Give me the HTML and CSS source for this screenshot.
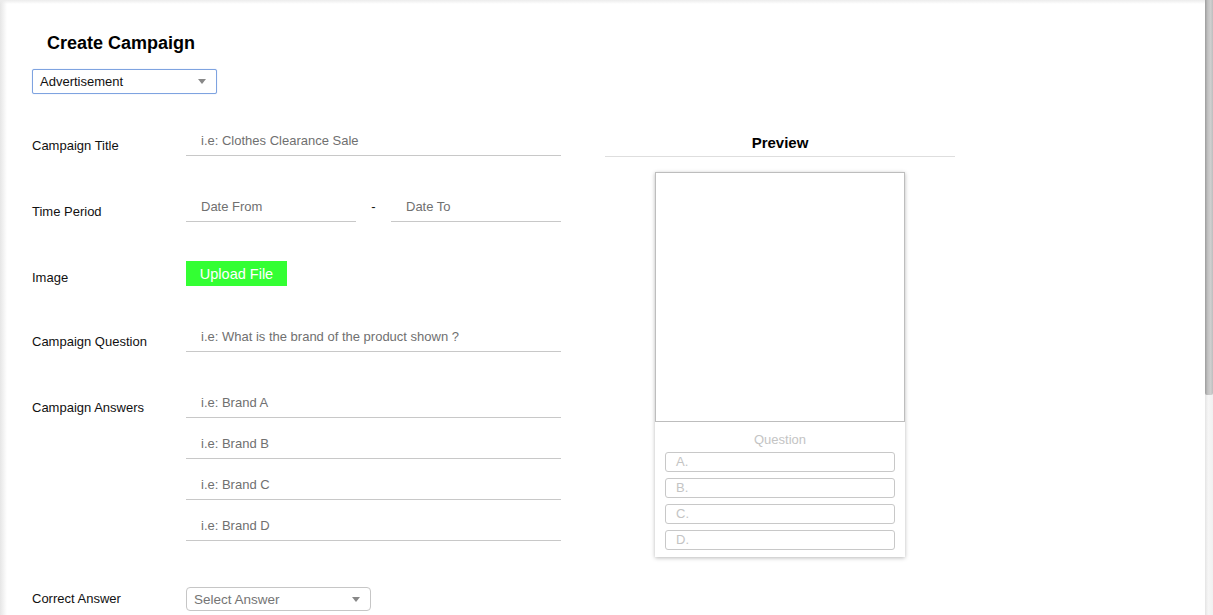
FILE: index.html
```html
<!DOCTYPE html>
<html>
<head>
<meta charset="utf-8">
<link rel="stylesheet" href="styles.css">
</head>
<body>
<div class="window">
  <main class="page">
    <h1 class="title">Create Campaign</h1>
    <div class="select type-select">
      <span class="select-text">Advertisement</span>
      <span class="caret"></span>
    </div>
    <div class="content">
      <div class="form">
        <div class="row">
          <div class="label">Campaign Title</div>
          <div class="field"><div class="input">i.e: Clothes Clearance Sale</div></div>
        </div>
        <div class="row">
          <div class="label">Time Period</div>
          <div class="field dates">
            <div class="input date">Date From</div>
            <span class="dash">-</span>
            <div class="input date">Date To</div>
          </div>
        </div>
        <div class="row row-image">
          <div class="label">Image</div>
          <div class="field"><button class="upload">Upload File</button></div>
        </div>
        <div class="row">
          <div class="label">Campaign Question</div>
          <div class="field"><div class="input">i.e: What is the brand of the product shown ?</div></div>
        </div>
        <div class="row">
          <div class="label">Campaign Answers</div>
          <div class="field answers">
            <div class="input">i.e: Brand A</div>
            <div class="input">i.e: Brand B</div>
            <div class="input">i.e: Brand C</div>
            <div class="input">i.e: Brand D</div>
          </div>
        </div>
        <div class="row row-correct">
          <div class="label">Correct Answer</div>
          <div class="field">
            <div class="select answer-select">
              <span class="select-text muted">Select Answer</span>
              <span class="caret"></span>
            </div>
          </div>
        </div>
      </div>
      <aside class="preview">
        <h2 class="preview-title">Preview</h2>
        <div class="card">
          <div class="card-image"></div>
          <div class="card-question">Question</div>
          <div class="card-answers">
            <div class="card-answer">A.</div>
            <div class="card-answer">B.</div>
            <div class="card-answer">C.</div>
            <div class="card-answer">D.</div>
          </div>
        </div>
      </aside>
    </div>
  </main>
  <div class="scrollbar"><div class="thumb"></div></div>
</div>
</body>
</html>
```

FILE: styles.css
```css
html, body {
  margin: 0;
  padding: 0;
  height: 100%;
  overflow: hidden;
  background: #fff;
  font-family: "Liberation Sans", Arial, sans-serif;
  color: #111;
}

.window {
  display: flex;
  height: 615px;
}

.page {
  flex: 1;
  padding: 0 0 0 32px;
  background:
    linear-gradient(to bottom, #ececec, rgba(255,255,255,0) 4px),
    linear-gradient(to right, #e6e6e6, rgba(255,255,255,0) 7px),
    #fff;
  overflow: hidden;
}

.title {
  margin: 0;
  padding: 33px 0 0 15px;
  font-size: 18px;
  line-height: 20px;
  font-weight: bold;
  color: #000;
}

.select {
  display: flex;
  align-items: center;
  justify-content: space-between;
  box-sizing: border-box;
  background: #fff;
}

.type-select {
  margin-top: 16px;
  width: 185px;
  height: 25px;
  border: 1px solid #7ea3e0;
  border-radius: 2px;
  box-shadow: 0 0 1px #a9c3ee;
  padding: 0 10px 0 7px;
}

.select-text {
  font-size: 13px;
  color: #111;
}

.select-text.muted {
  color: #757575;
  font-size: 13.5px;
}

.caret {
  width: 0;
  height: 0;
  border-left: 4px solid transparent;
  border-right: 4px solid transparent;
  border-top: 5px solid #888;
}

.content {
  display: flex;
  margin-top: 32px;
}

.form {
  display: flex;
  flex-direction: column;
  gap: 36px;
  width: 529px;
}

.row {
  display: flex;
}

.label {
  width: 154px;
  flex: none;
  padding-top: 10px;
  font-size: 13px;
  line-height: 20px;
  color: #111;
}

.field {
  width: 375px;
}

.input {
  box-sizing: border-box;
  height: 30px;
  border-bottom: 1px solid #c8c8c8;
  padding: 0 15px;
  font-size: 13px;
  line-height: 30px;
  color: #707070;
  white-space: nowrap;
}

.dates {
  display: flex;
  align-items: flex-start;
}

.date {
  width: 170px;
}

.dash {
  width: 35px;
  text-align: center;
  line-height: 30px;
  font-size: 13px;
  color: #111;
}

.row-image {
  height: 28px;
}

.upload {
  margin-top: 3px;
  width: 101px;
  height: 25px;
  border: none;
  background: #33ff33;
  color: #fff;
  font-family: "Liberation Sans", Arial, sans-serif;
  font-size: 14.5px;
  padding: 0;
  cursor: pointer;
}

.answers {
  display: flex;
  flex-direction: column;
  gap: 11px;
}

.row-correct .label {
  padding-top: 12px;
}

.answer-select {
  margin-top: 10px;
  width: 185px;
  height: 24px;
  border: 1px solid #c6c6c6;
  border-radius: 4px;
  padding: 0 10px 0 7px;
}

.preview {
  margin-left: 44px;
  width: 350px;
  padding-top: 7px;
}

.preview-title {
  margin: 0;
  text-align: center;
  font-size: 15px;
  line-height: 20px;
  font-weight: bold;
  color: #000;
  padding-bottom: 3px;
  border-bottom: 1px solid #dedede;
}

.card {
  margin: 15px 0 0 50px;
  width: 250px;
  box-shadow: 0 1px 4px rgba(0,0,0,0.28);
  padding-bottom: 7px;
  background: #fff;
}

.card-image {
  box-sizing: border-box;
  height: 250px;
  border: 1px solid #bdbdbd;
}

.card-question {
  text-align: center;
  font-size: 13px;
  line-height: 20px;
  color: #c4c4c4;
  padding-top: 8px;
}

.card-answers {
  display: flex;
  flex-direction: column;
  gap: 6px;
  margin: 2px 10px 0;
}

.card-answer {
  box-sizing: border-box;
  height: 20px;
  border: 1px solid #c8c8c8;
  border-radius: 3px;
  padding-left: 10px;
  font-size: 13px;
  line-height: 18px;
  color: #c4c4c4;
}

.scrollbar {
  width: 8px;
  flex: none;
  background: linear-gradient(to right, #e4e4e4, #f6f6f6 40%, #f0f0f0);
}

.thumb {
  height: 395px;
  background: linear-gradient(to right, #9c9c9c, #c2c2c2 35%, #cfcfcf 70%, #bdbdbd);
  border-radius: 0 0 2px 2px;
}
```
